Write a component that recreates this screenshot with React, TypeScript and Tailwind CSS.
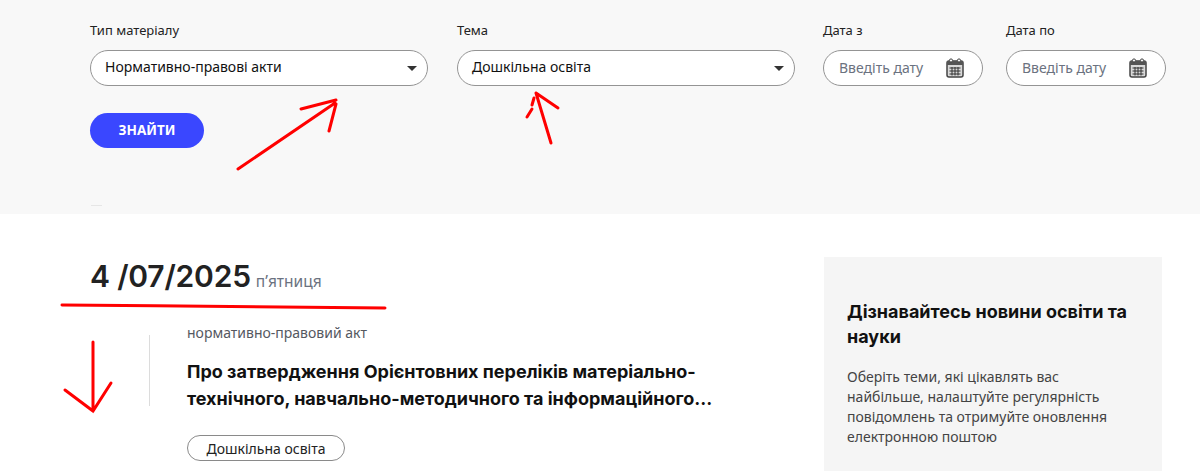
const labelCls = "h-[20px] text-[13px] leading-[20px] text-[#222] font-['Noto_Sans',sans-serif]";
const fieldCls = "mt-[10px] flex h-[36px] items-center justify-between rounded-[18px] border border-[#949494] bg-white";

function Caret() {
  return <span className="h-0 w-0 border-x-[5px] border-t-[5px] border-x-transparent border-t-[#333]" />;
}

function CalendarIcon() {
  return (
    <svg width="18" height="20" viewBox="0 0 18 20" fill="none">
      <rect x="1" y="3" width="16" height="16" rx="2" fill="#d9d9d9" stroke="#444" strokeWidth="1.5" />
      <rect x="1" y="3" width="16" height="4" fill="#555" />
      <circle cx="5" cy="2.5" r="1.6" fill="#f8f8f8" stroke="#444" />
      <circle cx="13" cy="2.5" r="1.6" fill="#f8f8f8" stroke="#444" />
      <path d="M3.5 10h11M3.5 13h11M3.5 16h11M6 9v8.5M9 9v8.5M12 9v8.5" stroke="#333" />
    </svg>
  );
}

function SelectField({ label, value, width }: { label: string; value: string; width: string }) {
  return (
    <div className={width}>
      <div className={labelCls}>{label}</div>
      <div className={fieldCls + " pl-[14px] pr-[10px]"}>
        <span className="pb-[3px] text-[14px] text-[#111] font-['Noto_Sans',sans-serif]">{value}</span>
        <Caret />
      </div>
    </div>
  );
}

function DateField({ label }: { label: string }) {
  return (
    <div className="w-[160px]">
      <div className={labelCls}>{label}</div>
      <div className={fieldCls + " pl-[15px] pr-[18px]"}>
        <span className="pb-[2px] text-[14px] text-[#6b7280] font-['Noto_Sans',sans-serif]">Введіть дату</span>
        <CalendarIcon />
      </div>
    </div>
  );
}

function RedMarks() {
  return (
    <svg className="absolute left-0 top-0 pointer-events-none" width="1200" height="471" fill="none" stroke="#f00" strokeWidth="3" strokeLinecap="round">
      <path d="M238 169 335 103M301 109 336 100M329 131 336 104" />
      <path d="M551 143 536 93M536 93 558 108M534 98 532 105M532 109 527 117" />
      <path d="M62 305C170 306 280 307 385 308" />
      <path d="M93 342 93 411M65 390 93 411 111 383" />
    </svg>
  );
}

export default function App() {
  return (
    <div className="relative h-[471px] w-[1200px] overflow-hidden bg-white font-['Noto_Sans',sans-serif]">
      <section className="relative h-[214px] bg-[#f8f8f8] pl-[90px] pt-[20px]">
        <div className="flex">
          <SelectField label="Тип матеріалу" value="Нормативно-правові акти" width="w-[338px]" />
          <div className="w-[29px]" />
          <SelectField label="Тема" value="Дошкільна освіта" width="w-[338px]" />
          <div className="w-[28px]" />
          <DateField label="Дата з" />
          <div className="w-[23px]" />
          <DateField label="Дата по" />
        </div>
        <button className="mt-[27px] h-[35px] w-[114px] rounded-[18px] bg-[#3a47ff] text-[13.5px] font-bold text-white">ЗНАЙТИ</button>
        <div className="absolute bottom-[8px] left-[91px] h-px w-[11px] bg-[#e6e6e6]" />
      </section>

      <div className="flex">
        <main className="w-[824px] shrink-0 pl-[90px] pt-[44px]">
          <div className="flex h-[36px] items-baseline">
            <span className="text-[30px] font-semibold leading-[36px] tracking-[-0.2px] text-[#222] font-['Inter',sans-serif]">4 /07/2025</span>
            <span className="ml-[5px] text-[15.5px] text-[#6b7280]">п’ятниця</span>
          </div>
          <div className="mt-[29px] flex">
            <div className="ml-[59px] mt-[12px] h-[71px] w-px bg-[#dcdcdc]" />
            <div className="ml-[37px] w-[540px]">
              <div className="text-[14px] leading-[20px] text-[#55585f]">нормативно-правовий акт</div>
              <h2 className="mt-[15px] text-[18px] font-bold leading-[27px] text-[#111] font-['Inter',sans-serif]">
                Про затвердження Орієнтовних переліків матеріально-технічного, навчально-методичного та інформаційного...
              </h2>
              <div className="mt-[23px] flex h-[26px] w-[158px] items-center justify-center rounded-[13px] border border-[#8a8a8a] text-[14px] text-[#222]">
                Дошкільна освіта
              </div>
            </div>
          </div>
        </main>
        <aside className="mt-[43px] h-[214px] w-[338px] bg-[#f5f5f5] px-[23px] pt-[42px]">
          <h3 className="text-[18px] font-bold leading-[25px] text-[#111] font-['Inter',sans-serif]">Дізнавайтесь новини освіти та науки</h3>
          <p className="mt-[18px] w-[270px] text-[14px] leading-[20px] text-[#444]">
            Оберіть теми, які цікавлять вас найбільше, налаштуйте регулярність повідомлень та отримуйте оновлення електронною поштою
          </p>
        </aside>
      </div>

      <RedMarks />
    </div>
  );
}
